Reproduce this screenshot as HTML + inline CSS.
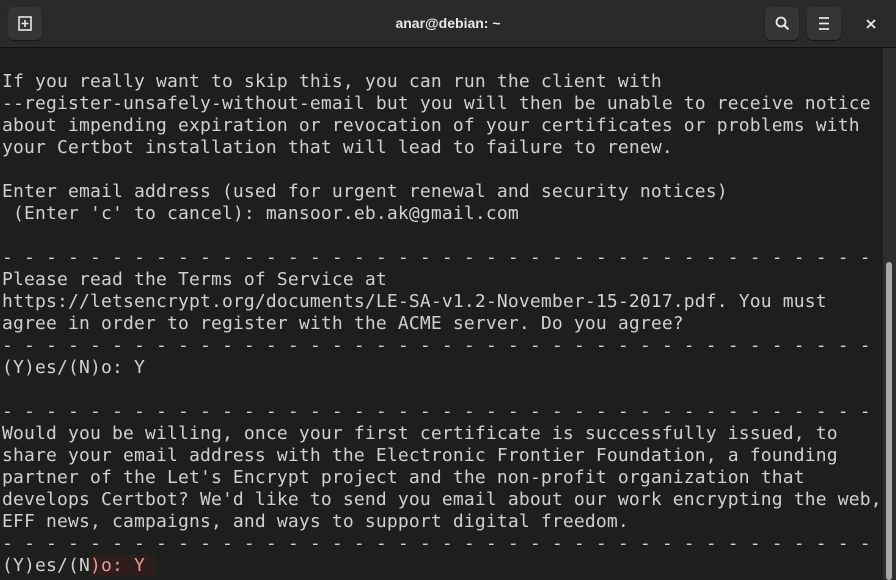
<!DOCTYPE html>
<html><head><style>
body{margin:0;width:896px;height:580px;overflow:hidden;background:#1e1e1e;font-family:"Liberation Sans",sans-serif}
.tb{position:absolute;left:0;top:0;width:896px;height:47px;background:#2a2a2a;border-bottom:1px solid #111}
.btn{position:absolute;top:7px;width:34px;height:33px;background:#353535;border-radius:6px;box-shadow:0 1px 1px #151515}
.title{position:absolute;left:0;right:0;top:15px;text-align:center;color:#e8e8e8;font-size:14px;font-weight:bold}
pre{position:absolute;left:2px;top:71px;margin:0;font-family:"DejaVu Sans Mono",monospace;font-size:18px;line-height:22px;color:#d0d0d0;letter-spacing:0.16px}
.sb{position:absolute;left:883px;top:48px;width:13px;height:532px;background:#2e2e2e}
.th{position:absolute;left:886px;top:262px;width:6px;height:318px;background:#a8a8a8;border-radius:3px}
.hl{background:#2e1d1d;color:#e89a9a}
</style></head><body>
<div class="tb">
<div class="btn" style="left:8px"><svg width="34" height="33"><rect x="11" y="10" width="12" height="13" fill="none" stroke="#e8e8e8" stroke-width="1.6"/><path d="M17 13v7M13.5 16.5h7" stroke="#e8e8e8" stroke-width="1.6"/></svg></div>
<div class="title">anar@debian: ~</div>
<div class="btn" style="left:765px"><svg width="34" height="33"><circle cx="16" cy="15" r="4.5" fill="none" stroke="#e8e8e8" stroke-width="1.8"/><path d="M19.5 18.5l4 4" stroke="#e8e8e8" stroke-width="2"/></svg></div>
<div class="btn" style="left:807px"><svg width="34" height="33"><path d="M12 11h10M12 16.5h10M12 22h10" stroke="#e8e8e8" stroke-width="1.8"/></svg></div>
<svg style="position:absolute;left:864px;top:17px" width="14" height="14"><path d="M3 3l8 8M11 3l-8 8" stroke="#e8e8e8" stroke-width="1.8"/></svg>
</div>
<pre>If you really want to skip this, you can run the client with
--register-unsafely-without-email but you will then be unable to receive notice
about impending expiration or revocation of your certificates or problems with
your Certbot installation that will lead to failure to renew.

Enter email address (used for urgent renewal and security notices)
 (Enter 'c' to cancel): mansoor.eb.ak@gmail.com

- - - - - - - - - - - - - - - - - - - - - - - - - - - - - - - - - - - - - - - -
Please read the Terms of Service at
https://letsencrypt.org/documents/LE-SA-v1.2-November-15-2017.pdf. You must
agree in order to register with the ACME server. Do you agree?
- - - - - - - - - - - - - - - - - - - - - - - - - - - - - - - - - - - - - - - -
(Y)es/(N)o: Y

- - - - - - - - - - - - - - - - - - - - - - - - - - - - - - - - - - - - - - - -
Would you be willing, once your first certificate is successfully issued, to
share your email address with the Electronic Frontier Foundation, a founding
partner of the Let's Encrypt project and the non-profit organization that
develops Certbot? We'd like to send you email about our work encrypting the web,
EFF news, campaigns, and ways to support digital freedom.
- - - - - - - - - - - - - - - - - - - - - - - - - - - - - - - - - - - - - - - -
(Y)es/(N<span class="hl">)o: Y </span></pre>
<div class="sb"></div><div class="th"></div>
</body></html>
